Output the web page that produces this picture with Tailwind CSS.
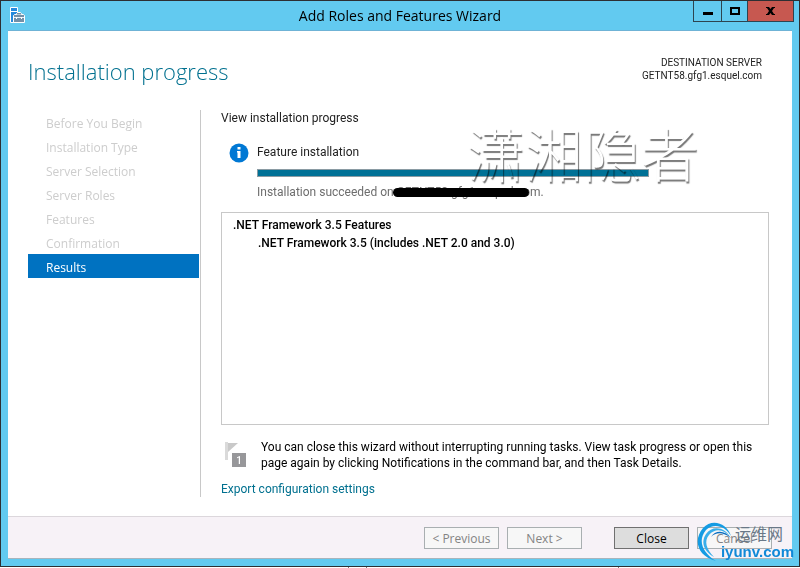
<!DOCTYPE html>
<html lang="en">
  <head>
    <meta charset="UTF-8" />
    <meta name="viewport" content="width=device-width, initial-scale=1.0" />
    <title>Add Roles and Features Wizard</title>
    <script src="https://cdn.jsdelivr.net/npm/@tailwindcss/browser@4"></script>
  </head>
  <body class="flex h-screen flex-col overflow-hidden bg-white font-['Open_Sans','Noto_Sans_CJK_SC',sans-serif] text-[12px] leading-4 text-[#222]">
    <div class="relative flex min-h-0 flex-1 flex-col border border-[#2d2f33] bg-[#62caf0] px-[7px] pb-[7px]">
      <!-- Title bar -->
      <header class="relative flex h-[30px] shrink-0 items-center justify-center border-b border-[#6fb3d6]">
        <svg class="absolute top-[6px] left-px h-4 w-4" viewBox="0 0 16 16" aria-hidden="true">
          <path d="M1.500.5h7v15h-7z" fill="#2489dc" stroke="#fff" />
          <path d="M2 4.500h6" stroke="#fff" />
          <path d="M4.500 15.500V8.500l1-1h9l1 1v7z" fill="#7390a8" stroke="#fff" />
          <path d="M7.500 7.500v-1l1-1h3l1 1v1" fill="#7390a8" stroke="#fff" />
          <path d="M5 10.500h10" fill="none" stroke="#e6f2fa" />
          <path d="M7.500 10v2M12.500 10v2" fill="none" stroke="#fff" />
        </svg>
        <h1 class="text-[14px] text-black">Add Roles and Features Wizard</h1>
        <div class="absolute top-0 -right-[2px] flex h-[21px] border border-t-0 border-[#2d4450]">
          <button type="button" aria-label="Minimize" class="flex w-7 items-center justify-center border-r border-[#2d4450]">
            <span class="mt-[5px] h-[3px] w-[10px] bg-black"></span>
          </button>
          <button type="button" aria-label="Maximize" class="flex w-[26px] items-center justify-center border-r border-[#2d4450]">
            <span class="h-2 w-[10px] border-2 border-black"></span>
          </button>
          <button type="button" aria-label="Close window" class="flex w-[45px] items-center justify-center bg-[#c75850]">
            <svg class="h-2 w-[9px]" viewBox="0 0 9 8" aria-hidden="true">
              <path d="M0 0h3l1.500 2L6 0h3v1H8L6 4l2 3h1v1H6L4.500 6 3 8H0V7h1l2-3-2-3H0z" fill="#000" />
            </svg>
          </button>
        </div>
      </header>

      <div class="flex min-h-0 flex-1 flex-col bg-white pr-[23px] pb-[19px] pl-5">
        <div class="flex h-[79px] shrink-0 items-start justify-between pt-6 pr-[7px]">
          <h2 class="text-[22px] leading-8 font-light text-[#00708f]">Installation progress</h2>
          <p class="pt-px text-right font-[Roboto,sans-serif] text-[10px] leading-[13px]">DESTINATION SERVER<br />GETNT58.gfg1.esquel.com</p>
        </div>

        <div class="flex min-h-0 flex-1">
          <nav class="w-[173px] shrink-0 border-r border-[#c8c8c8] pr-px text-[12px] leading-5 text-[#cdcdcd]">
            <ul>
              <li class="pt-1 pl-[18px]">Before You Begin</li>
              <li class="pt-1 pl-[18px]">Installation Type</li>
              <li class="pt-1 pl-[18px]">Server Selection</li>
              <li class="pt-1 pl-[18px]">Server Roles</li>
              <li class="pt-1 pl-[18px]">Features</li>
              <li class="pt-1 pl-[18px]">Confirmation</li>
              <li class="bg-[#0072c1] pt-1 pl-[18px] text-white" aria-current="step">Results</li>
            </ul>
          </nav>

          <main class="flex min-w-0 flex-1 flex-col pl-5 font-[Roboto,sans-serif]">
            <p>View installation progress</p>

            <section class="relative mt-[18px] flex gap-2 pl-2">
              <svg class="mt-[-1px] h-5 w-5 shrink-0" viewBox="0 0 20 20" aria-hidden="true">
                <circle cx="10" cy="10" r="9.500" fill="#0078d4" />
                <path d="M8.500 4h3v2.500h-3zM8 8h3.500v7h-3V9.500H8z" fill="#fff" />
              </svg>
              <div class="w-full max-w-[392px]">
                <p>Feature installation</p>
                <div role="progressbar" aria-label="Feature installation" aria-valuenow="100" class="mt-[9px] h-2 border border-[#8a9ba3] bg-[#007196]"></div>
                <p class="mt-[7px] whitespace-nowrap text-[#6d6d6d]">Installation succeeded on <span class="relative">GETNT58.gfg1.esquel.com<span class="absolute top-[3px] right-3 -left-1 h-[9px] rounded-full bg-black"></span></span>.</p>
              </div>
              <div class="pointer-events-none absolute -top-6 left-[246px] font-['Noto_Sans_CJK_SC',sans-serif] text-[58px] leading-[64px] font-light whitespace-nowrap text-white mix-blend-multiply [text-shadow:1px_2px_1px_#777]">潇湘隐者</div>
            </section>

            <div class="mt-3 min-h-0 flex-1 border border-[#c8c8c8] px-[11px] py-[3px] leading-[18px] font-medium text-black">
              <p>.NET Framework 3.5 Features</p>
              <p class="pl-[25px]">.NET Framework 3.5 (includes .NET 2.0 and 3.0)</p>
            </div>

            <div class="mt-[14px] flex gap-[14px] pl-1 text-black">
              <svg class="mt-[3px] h-[26px] w-[22px] shrink-0" viewBox="0 0 22 26" aria-hidden="true">
                <path d="M0 0h3v18H0z" fill="#dadada" />
                <path d="M3 1h10L3 10z" fill="#c9c9c9" />
                <path d="M7 11h14v14H7z" fill="#97979a" />
                <text x="14" y="22" text-anchor="middle" font-size="10" font-weight="500" fill="#fff">1</text>
              </svg>
              <p>You can close this wizard without interrupting running tasks. View task progress or open this page again by clicking Notifications in the command bar, and then Task Details.</p>
            </div>
            <a href="#" class="mt-[10px] self-start text-[#00708f]">Export configuration settings</a>
          </main>
        </div>
      </div>

      <footer class="relative flex h-[43px] shrink-0 items-start gap-2 border-t border-b border-t-[#dcd7dc] border-b-[#a8b4bc] bg-[#f7f2f7] pt-[10px] pr-5">
        <button type="button" disabled class="ml-auto h-[22px] w-[75px] border border-[#a9afb1] bg-[#f7f7f7] pt-[2px] text-[#838383]">&lt; Previous</button>
        <button type="button" disabled class="h-[22px] w-[75px] border border-[#a9afb1] bg-[#f7f7f7] pt-[2px] text-[#838383]">Next &gt;</button>
        <button type="button" class="ml-6 h-[22px] w-[75px] border border-[#707070] bg-[#dddddd] pt-[2px] text-black">Close</button>
        <button type="button" disabled class="h-[22px] w-[75px] border border-[#a9afb1] bg-[#f7f7f7] pt-[2px] text-[#838383]">Cancel</button>

        <div class="pointer-events-none absolute top-1 -right-[2px] h-10 w-[97px]">
          <svg class="absolute top-0 left-0 h-10 w-9" viewBox="0 0 36 40" aria-hidden="true">
            <path d="M34 15C30 2 15-3 6 7C-4 19 0 35 19 40C6 32 0 20 9 9C16 2 28 4 34 15z" fill="#159be3" />
            <path d="M33 16C28 6 15 4 9 13C3 22 8 31 17 36C9 28 7 20 12 14C18 7 27 8 33 16z" fill="#38aeea" />
            <path d="M34 17C28 9 18 9 14 16C19 11 26 11 34 17z" fill="#0b6fc0" />
          </svg>
          <span class="absolute top-[2px] right-[11px] font-['Noto_Sans_CJK_SC',sans-serif] text-[16px] leading-5 text-[#697887]">运维网</span>
          <span class="absolute right-0 bottom-px font-['Liberation_Sans',sans-serif] text-[15px] leading-4 font-bold text-[#1089d8]">iyunv.com</span>
        </div>
      </footer>
    </div>
    <div class="flex h-px shrink-0 bg-white">
      <span class="ml-[348px] w-px bg-[#777]"></span>
      <span class="ml-[17px] w-px bg-[#777]"></span>
      <span class="ml-[251px] w-px bg-[#777]"></span>
    </div>
  </body>
</html>
